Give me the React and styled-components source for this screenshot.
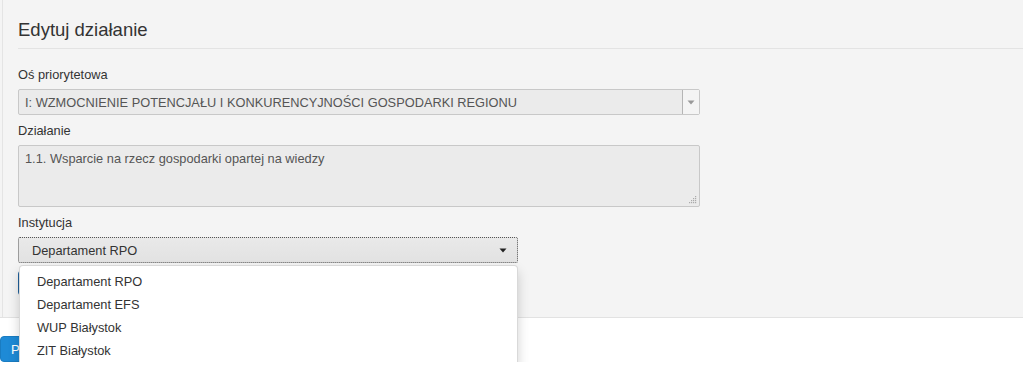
import React from "react";
import styled, { createGlobalStyle } from "styled-components";

const GlobalStyle = createGlobalStyle`
  html, body {
    margin: 0;
    padding: 0;
    background: #fff;
    font-family: "Liberation Sans", Arial, sans-serif;
    font-size: 12.8px;
    color: #333;
  }
`;

const Panel = styled.div`
  background: linear-gradient(to right, #f4f4f4 2px, #e4e4e4 2px, #e4e4e4 3px, #f4f4f4 3px);
  border-bottom: 1px solid #e2e2e2;
  padding: 20px 0 21px 18px;
`;

const Title = styled.h3`
  margin: 0 0 17px 0;
  font-size: 18.5px;
  font-weight: normal;
  line-height: 20px;
  color: #333;
  padding-bottom: 8px;
  border-bottom: 1px solid #e3e3e3;
`;

const Group = styled.div`
  margin-bottom: 7px;
`;

const Label = styled.div`
  line-height: 18px;
  margin-bottom: 5px;
  color: #333;
`;

const DisabledSelect = styled.div`
  box-sizing: border-box;
  width: 682px;
  height: 26px;
  display: flex;
  align-items: center;
  background: #ebebeb;
  border: 1px solid #c8c8c8;
  border-radius: 2px;
  color: #555;
  padding-left: 6px;
`;

const SelectValue = styled.span`
  flex: 1;
`;

const ArrowBox = styled.div`
  width: 16px;
  height: 24px;
  border-left: 1px solid #b5b5b5;
  background: #f4f4f4;
  display: flex;
  align-items: center;
  justify-content: center;
`;

const TextBox = styled.div`
  box-sizing: border-box;
  position: relative;
  width: 682px;
  height: 62px;
  background: #ebebeb;
  border: 1px solid #c8c8c8;
  border-radius: 2px;
  color: #555;
  padding: 5px 6px;
  line-height: 16px;
`;

const Grip = styled.svg`
  position: absolute;
  right: 2px;
  bottom: 2px;
`;

const Dropdown = styled.div`
  position: relative;
  width: 500px;
`;

const FocusSelect = styled.div`
  box-sizing: border-box;
  width: 500px;
  height: 26px;
  display: flex;
  align-items: center;
  padding: 0 10px 0 13px;
  background: linear-gradient(#e9e9e9, #e2e2e2);
  border: 1px dotted #555;
  border-radius: 2px;
  color: #333;
`;

const Menu = styled.ul`
  position: absolute;
  top: 28px;
  left: 1px;
  width: 499px;
  box-sizing: border-box;
  margin: 0;
  padding: 4px 0 5px;
  list-style: none;
  background: #fff;
  border: 1px solid rgba(0, 0, 0, 0.15);
  border-radius: 4px;
  box-shadow: 0 6px 12px rgba(0, 0, 0, 0.175);
  z-index: 10;
`;

const MenuItem = styled.li`
  padding: 0 17px;
  line-height: 23px;
  color: #333;
  white-space: nowrap;
`;

const Button = styled.button`
  display: block;
  font-family: inherit;
  font-size: 13px;
  color: #fff;
  background: ${p => (p.dark ? "#2a74b8" : "#1e8ad6")};
  border: 1px solid ${p => (p.dark ? "#1f5f99" : "#1a7cc1")};
  border-radius: 4px;
  height: 26px;
  padding: 0 10px;
`;

const Footer = styled.div`
  display: flex;
  padding: 18px 0 0 0;
`;

const Caret = ({ color }) => (
  <svg width="8" height="5" viewBox="0 0 8 5">
    <path d="M0.5 0.5 H7.5 L4 4.5 Z" fill={color} />
  </svg>
);

const items = ["Departament RPO", "Departament EFS", "WUP Białystok", "ZIT Białystok"];

export default function App() {
  return (
    <>
      <GlobalStyle />
      <Panel>
        <Title>Edytuj działanie</Title>
        <Group>
          <Label>Oś priorytetowa</Label>
          <DisabledSelect>
            <SelectValue>I: WZMOCNIENIE POTENCJAŁU I KONKURENCYJNOŚCI GOSPODARKI REGIONU</SelectValue>
            <ArrowBox>
              <Caret color="#999" />
            </ArrowBox>
          </DisabledSelect>
        </Group>
        <Group>
          <Label>Działanie</Label>
          <TextBox>
            1.1. Wsparcie na rzecz gospodarki opartej na wiedzy
            <Grip width="8" height="8" viewBox="0 0 8 8">
              {[[6, 1], [4, 3], [6, 3], [2, 5], [4, 5], [6, 5], [0, 7], [2, 7], [4, 7], [6, 7]].map(([x, y]) => (
                <rect key={`${x}-${y}`} x={x} y={y - 1} width="1.2" height="1.2" fill="#aaa" />
              ))}
            </Grip>
          </TextBox>
        </Group>
        <Group>
          <Label>Instytucja</Label>
          <Dropdown>
            <FocusSelect>
              <SelectValue>Departament RPO</SelectValue>
              <Caret color="#222" />
            </FocusSelect>
            <Menu>
              {items.map(item => (
                <MenuItem key={item}>{item}</MenuItem>
              ))}
            </Menu>
          </Dropdown>
        </Group>
        <Button dark>Zapisz</Button>
      </Panel>
      <Footer>
        <Button>Powrót</Button>
      </Footer>
    </>
  );
}
